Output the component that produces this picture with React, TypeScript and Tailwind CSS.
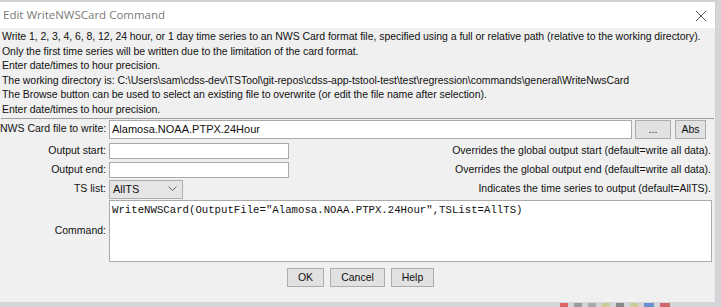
import React from "react";

const ui = { fontFamily: '"Liberation Sans", Arial, sans-serif' };
const mono = { fontFamily: '"Liberation Mono", "Courier New", monospace' };

const notes = [
  "Write 1, 2, 3, 4, 6, 8, 12, 24 hour, or 1 day time series to an NWS Card format file, specified using a full or relative path (relative to the working directory).",
  "Only the first time series will be written due to the limitation of the card format.",
  "Enter date/times to hour precision.",
  "The working directory is: C:\\Users\\sam\\cdss-dev\\TSTool\\git-repos\\cdss-app-tstool-test\\test\\regression\\commands\\general\\WriteNwsCard",
  "The Browse button can be used to select an existing file to overwrite (or edit the file name after selection).",
  "Enter date/times to hour precision.",
];

function Btn({ label, w }: { label: string; w: string }) {
  return (
    <button
      className={`${w} h-[19px] border border-[#adadad] bg-[#e1e1e1] text-[10.5px] leading-none text-[#111]`}
      style={ui}
    >
      {label}
    </button>
  );
}

function Label({ text }: { text: string }) {
  return <div className="w-[109px] shrink-0 whitespace-nowrap pr-[3px] text-right">{text}</div>;
}

export default function App() {
  return (
    <div className="relative h-[307px] w-[721px] overflow-hidden bg-[#d6d6da]">
      <div className="flex h-[302px] w-[716px] flex-col border-t-2 border-r border-[#cfcfcf] bg-[#f0f0f0] text-[10.5px] text-[#111]" style={ui}>
        {/* title bar */}
        <div className="flex h-[26px] shrink-0 items-center justify-between bg-white pl-[3px] pr-[8px]">
          <span className="text-[11.5px] text-[#7a7a7a]" style={{ fontFamily: '"Open Sans", sans-serif' }}>
            Edit WriteNWSCard Command
          </span>
          <svg width="12" height="12" viewBox="0 0 12 12" className="mt-[1px]">
            <path d="M1 1 L11 11 M11 1 L1 11" stroke="#555" strokeWidth="1" />
          </svg>
        </div>

        {/* notes */}
        <div className="flex flex-col pl-[2px] pt-[1px] leading-[14.6px] tracking-[-0.05px]">
          {notes.map((n, i) => (
            <div key={i} className="whitespace-nowrap">{n}</div>
          ))}
        </div>
        <div className="mx-[1px] mt-[1px] h-px bg-[#a0a0a0]" />

        {/* form */}
        <div className="flex flex-col pt-[1px]">
          <div className="flex h-[19px] items-center">
            <Label text="NWS Card file to write:" />
            <div className="flex h-[19px] w-[523px] items-center border border-[#aaa] bg-white px-[2px] text-[11px]">Alamosa.NOAA.PTPX.24Hour</div>
            <div className="ml-[3px] flex gap-[4px]">
              <Btn label="..." w="w-[36px]" />
              <Btn label="Abs" w="w-[31px]" />
            </div>
          </div>

          <div className="mt-[4px] flex h-[16px] items-center">
            <Label text="Output start:" />
            <div className="h-[16px] w-[180px] border border-[#aaa] bg-white" />
            <div className="ml-auto pr-[4px]">Overrides the global output start (default=write all data).</div>
          </div>
          <div className="mt-[3px] flex h-[16px] items-center">
            <Label text="Output end:" />
            <div className="h-[16px] w-[180px] border border-[#aaa] bg-white" />
            <div className="ml-auto pr-[4px]">Overrides the global output end (default=write all data).</div>
          </div>
          <div className="mt-[2px] flex h-[19px] items-center">
            <Label text="TS list:" />
            <div className="flex h-[19px] w-[74px] items-center justify-between border border-[#adadad] bg-[#e5e5e5] pl-[3px] pr-[5px]">
              <span className="text-[11px]">AllTS</span>
              <svg width="9" height="6" viewBox="0 0 9 6">
                <path d="M0.5 0.5 L4.5 4.5 L8.5 0.5" stroke="#666" fill="none" />
              </svg>
            </div>
            <div className="ml-auto pr-[4px]">Indicates the time series to output (default=AllTS).</div>
          </div>

          <div className="mt-[1px] flex h-[62px] items-center">
            <Label text="Command:" />
            <div className="h-[62px] w-[603px] border border-[#aaa] bg-white px-[2px] pt-[3px] text-[10.7px] leading-[13px]" style={mono}>
              WriteNWSCard(OutputFile="Alamosa.NOAA.PTPX.24Hour",TSList=AllTS)
            </div>
          </div>

          <div className="mt-[6px] flex justify-center gap-[6px] pl-[6px]">
            <Btn label="OK" w="w-[37px]" />
            <Btn label="Cancel" w="w-[55px]" />
            <Btn label="Help" w="w-[43px]" />
          </div>
        </div>
      </div>
      <div className="absolute bottom-0 left-[560px] flex h-[4px] gap-[6px]">
        <div className="h-[4px] w-[8px] bg-[#d66]" />
        <div className="h-[4px] w-[8px] bg-[#999]" />
        <div className="h-[4px] w-[8px] bg-[#aaa]" />
        <div className="h-[4px] w-[8px] bg-[#cc9]" />
        <div className="h-[4px] w-[8px] bg-[#888]" />
        <div className="h-[4px] w-[8px] bg-[#cc9]" />
        <div className="h-[4px] w-[10px] bg-[#6a8fd0]" />
        <div className="h-[4px] w-[10px] bg-[#d06a6a]" />
      </div>
    </div>
  );
}
